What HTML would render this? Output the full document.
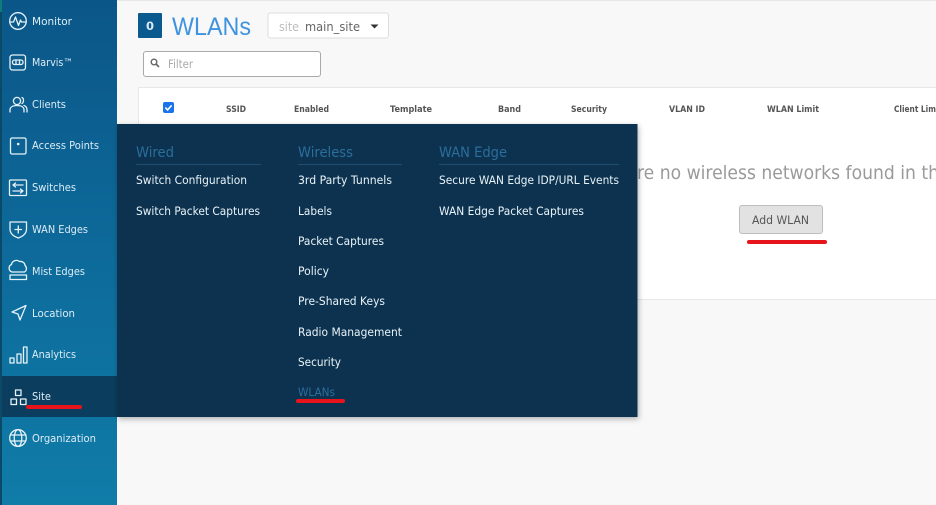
<!DOCTYPE html>
<html lang="en"><head><meta charset="utf-8"><title>WLANs</title>
<style>
html,body{margin:0;padding:0;width:936px;height:505px;overflow:hidden;background:#f8f8f8}
svg{display:block;font-family:"DejaVu Sans",sans-serif}
.n{font-size:10.5px;fill:#dcedf6}
.h{font-size:9px;fill:#555;font-weight:700}
.m{font-size:11.5px;fill:#e8f3f8}
.g{font-size:14.5px;fill:#2a6e9c}
.i{fill:none;stroke:#e6f2f8;stroke-width:1.3;stroke-linejoin:round;stroke-linecap:round}
</style></head><body>
<svg xmlns="http://www.w3.org/2000/svg" width="936" height="505" viewBox="0 0 936 505">
<defs>
<linearGradient id="s" x1="0" y1="0" x2="0" y2="1"><stop offset="0" stop-color="#0b5688"/><stop offset=".5" stop-color="#0d6a9a"/><stop offset="1" stop-color="#107ca8"/></linearGradient>
<filter id="sh" x="-5%" y="-5%" width="110%" height="112%"><feDropShadow dx="1" dy="2" stdDeviation="3" flood-color="#000" flood-opacity=".3"/></filter>
</defs>
<rect width="936" height="505" fill="#f8f8f8"/>
<rect x="117" width="819" height="1" fill="#e8e8e8"/>

<!-- Sidebar -->
<rect x="0" y="0" width="117" height="505" fill="url(#s)"/>
<rect x="0" y="0" width="2" height="505" fill="#0a4a66"/>
<rect x="0" y="0" width="2" height="12" fill="#0c7d78"/>
<rect x="2" y="376" width="115" height="41" fill="#0a3d5e"/>

<text class="n" x="32" y="25" textLength="40" lengthAdjust="spacingAndGlyphs">Monitor</text>
<text class="n" x="32" y="66" textLength="41" lengthAdjust="spacingAndGlyphs">Marvis™</text>
<text class="n" x="32" y="108" textLength="34" lengthAdjust="spacingAndGlyphs">Clients</text>
<text class="n" x="32" y="149" textLength="67" lengthAdjust="spacingAndGlyphs">Access Points</text>
<text class="n" x="32" y="191" textLength="44" lengthAdjust="spacingAndGlyphs">Switches</text>
<text class="n" x="32" y="233" textLength="56" lengthAdjust="spacingAndGlyphs">WAN Edges</text>
<text class="n" x="32" y="275" textLength="53" lengthAdjust="spacingAndGlyphs">Mist Edges</text>
<text class="n" x="32" y="317" textLength="43" lengthAdjust="spacingAndGlyphs">Location</text>
<text class="n" x="32" y="358" textLength="44" lengthAdjust="spacingAndGlyphs">Analytics</text>
<text class="n" x="32" y="400" textLength="19" lengthAdjust="spacingAndGlyphs">Site</text>
<text class="n" x="32" y="442" textLength="64" lengthAdjust="spacingAndGlyphs">Organization</text>

<!-- Icons -->
<g class="i">
<circle cx="18" cy="21" r="8.3"/><path d="M10 22h3.5l2-5 3 8.5 2-5.5 1 2h4"/>
<rect x="10" y="55" width="15.5" height="15" rx="2.5"/><rect x="12.5" y="60" width="10.5" height="4.5" rx="2"/><path d="M16 60v4.500M19.500 60v4.500"/>
<circle cx="17" cy="101" r="3.600"/><path d="M10 112v-2c0-3 3-4.500 7-4.500s7 1.500 7 4.500v2M22 97.500c2 .8 2 5 0 6M24 105.500c2 .6 3 2 3 4.500v2"/>
<rect x="10.500" y="138" width="15.500" height="16" rx="1.500"/>
<rect x="9.500" y="180" width="17" height="15.500" rx="1"/><path d="M13 185h10M13 185l2.500-2M13 185l2.500 2M13 191h10M23 191l-2.500-2M23 191l-2.500 2"/>
<path d="M10 222h16.500v7c0 5-4 7.500-8.200 9-4.300-1.500-8.300-4-8.300-9z"/><path d="M18.300 226v7M15 229.500h6.500"/>
<path d="M12 272a4 4 0 0 1-.5-7.500c.5-3.500 5-5.500 8-3 3-.5 5.500 1.500 5.500 4 2 1.500 2 5-.5 6.500z"/><rect x="10" y="275" width="16.500" height="4.500"/>
<path d="M12 312l14-6.500-6 14.500-2-6z"/>
<rect x="10" y="358" width="4" height="5"/><rect x="17" y="354" width="4" height="9"/><rect x="23.500" y="347" width="3.500" height="16"/>
<rect x="15.500" y="390" width="5.500" height="5.500"/><rect x="11" y="399" width="5.500" height="5.500"/><rect x="20.500" y="399" width="5.500" height="5.500"/>
<circle cx="18" cy="438" r="8.300"/><ellipse cx="18" cy="438" rx="3.800" ry="8.300"/><path d="M10.500 435h15M10.500 441h15"/>
</g>
<circle cx="18.200" cy="144" r="1.300" fill="#e6f2f8"/>

<!-- Header -->
<rect x="138" y="13" width="24" height="25" rx="1" fill="#0a5a90"/>
<text x="150" y="30" text-anchor="middle" font-size="11.500" font-weight="700" fill="#dcebf4">0</text>
<text x="172" y="35" font-size="25" fill="#3f93de" textLength="79" lengthAdjust="spacingAndGlyphs" style="font-family:'Liberation Sans',sans-serif">WLANs</text>
<rect x="268" y="13" width="120.500" height="25" rx="2.500" fill="#fff" stroke="#ddd"/>
<text x="279" y="31" font-size="12.500" fill="#bdbdbd" textLength="20" lengthAdjust="spacingAndGlyphs">site</text>
<text x="305" y="31" font-size="12.500" fill="#666" textLength="55" lengthAdjust="spacingAndGlyphs">main_site</text>
<path d="M370.500 24.500h8l-4 4z" fill="#333"/>

<rect x="143.500" y="51.500" width="177" height="25" rx="2.500" fill="#fff" stroke="#aaa"/>
<circle cx="154" cy="62" r="2.800" fill="none" stroke="#666" stroke-width="1.400"/><path d="M156 64l3 3" stroke="#666" stroke-width="1.600"/>
<text x="168" y="68" font-size="11.500" fill="#aaa" textLength="25" lengthAdjust="spacingAndGlyphs">Filter</text>

<!-- Card -->
<rect x="138.500" y="87.500" width="800" height="212" fill="#fff" stroke="#e8e8e8"/>
<rect x="163" y="102" width="11" height="11" rx="2" fill="#1a73e8"/>
<path d="M165.300 107.500l2.300 2.400 4-4.500" fill="none" stroke="#fff" stroke-width="1.600"/>
<text class="h" x="226" y="112" textLength="20" lengthAdjust="spacingAndGlyphs">SSID</text>
<text class="h" x="294" y="112" textLength="35" lengthAdjust="spacingAndGlyphs">Enabled</text>
<text class="h" x="390" y="112" textLength="42" lengthAdjust="spacingAndGlyphs">Template</text>
<text class="h" x="498" y="112" textLength="23" lengthAdjust="spacingAndGlyphs">Band</text>
<text class="h" x="571" y="112" textLength="36" lengthAdjust="spacingAndGlyphs">Security</text>
<text class="h" x="669" y="112" textLength="36" lengthAdjust="spacingAndGlyphs">VLAN ID</text>
<text class="h" x="767" y="112" textLength="52" lengthAdjust="spacingAndGlyphs">WLAN Limit</text>
<text class="h" x="894" y="112" textLength="48" lengthAdjust="spacingAndGlyphs">Client Limit</text>

<text x="637" y="179" font-size="19" fill="#9a9a9a" textLength="302" lengthAdjust="spacingAndGlyphs">re no wireless networks found in th</text>
<rect x="739.500" y="205.500" width="83" height="28" rx="2.500" fill="#e2e2e2" stroke="#bdbdbd"/>
<text x="752" y="224" font-size="11.500" fill="#555" textLength="57" lengthAdjust="spacingAndGlyphs">Add WLAN</text>
<rect x="747" y="240" width="80" height="4" rx="2" fill="#e8141c"/>

<!-- Menu -->
<rect x="117" y="124" width="520.500" height="293" fill="#07334f" filter="url(#sh)"/>
<text class="g" x="136" y="157" textLength="38" lengthAdjust="spacingAndGlyphs">Wired</text>
<text class="g" x="298" y="157" textLength="55" lengthAdjust="spacingAndGlyphs">Wireless</text>
<text class="g" x="439" y="157" textLength="68" lengthAdjust="spacingAndGlyphs">WAN Edge</text>
<g fill="#1f4f70"><rect x="136" y="164" width="125" height="1"/><rect x="298" y="164" width="104" height="1"/><rect x="439" y="164" width="180" height="1"/></g>

<text class="m" x="136" y="184" textLength="111" lengthAdjust="spacingAndGlyphs">Switch Configuration</text>
<text class="m" x="136" y="215" textLength="124" lengthAdjust="spacingAndGlyphs">Switch Packet Captures</text>
<text class="m" x="298" y="184" textLength="94" lengthAdjust="spacingAndGlyphs">3rd Party Tunnels</text>
<text class="m" x="298" y="215" textLength="34" lengthAdjust="spacingAndGlyphs">Labels</text>
<text class="m" x="298" y="245" textLength="86" lengthAdjust="spacingAndGlyphs">Packet Captures</text>
<text class="m" x="298" y="275" textLength="31" lengthAdjust="spacingAndGlyphs">Policy</text>
<text class="m" x="298" y="305" textLength="87" lengthAdjust="spacingAndGlyphs">Pre-Shared Keys</text>
<text class="m" x="298" y="336" textLength="104" lengthAdjust="spacingAndGlyphs">Radio Management</text>
<text class="m" x="298" y="366" textLength="43" lengthAdjust="spacingAndGlyphs">Security</text>
<text x="298" y="396" font-size="11.500" fill="#2a6e9c" textLength="37" lengthAdjust="spacingAndGlyphs">WLANs</text>
<text class="m" x="439" y="184" textLength="180" lengthAdjust="spacingAndGlyphs">Secure WAN Edge IDP/URL Events</text>
<text class="m" x="439" y="215" textLength="145" lengthAdjust="spacingAndGlyphs">WAN Edge Packet Captures</text>

<!-- Red underlines -->
<rect x="26" y="405" width="56" height="4" rx="2" fill="#e8141c"/>
<rect x="296" y="399" width="49" height="4" rx="2" fill="#e8141c"/>
</svg>
</body></html>
